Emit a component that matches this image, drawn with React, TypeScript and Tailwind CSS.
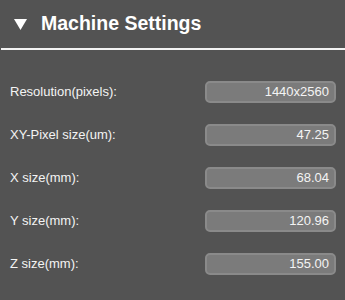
const rows = [
  { label: "Resolution(pixels):", value: "1440x2560" },
  { label: "XY-Pixel size(um):", value: "47.25" },
  { label: "X size(mm):", value: "68.04" },
  { label: "Y size(mm):", value: "120.96" },
  { label: "Z size(mm):", value: "155.00" },
];

export default function App() {
  return (
    <div className="h-[300px] w-[345px] overflow-hidden bg-[#535353] font-['Liberation_Sans',Arial,sans-serif] text-white">
      {/* Header */}
      <div className="flex h-[48px] items-center pl-[14px]">
        <svg width="13" height="11" viewBox="0 0 13 11" className="mt-[1px]">
          <polygon points="0,0 13,0 6.5,11" fill="#ffffff" />
        </svg>
        <h2 className="ml-[14px] text-[19.5px] font-bold leading-none">Machine Settings</h2>
      </div>
      <div className="ml-[1px] h-[2px] bg-[#f2f2f2]" />

      {/* Settings */}
      <div className="flex flex-col gap-[21px] pt-[31px] pl-[10px] pr-[9px]">
        {rows.map((row) => (
          <div key={row.label} className="flex h-[22px] items-center justify-between">
            <span className="text-[13px] text-[#f4f4f4]">{row.label}</span>
            <div className="flex h-[22px] w-[131px] items-center justify-end rounded-[5px] border-2 border-[#8a8a8a] bg-[#7b7b7b] pr-[5px] text-[13px] text-[#f4f4f4]">
              {row.value}
            </div>
          </div>
        ))}
      </div>
    </div>
  );
}
